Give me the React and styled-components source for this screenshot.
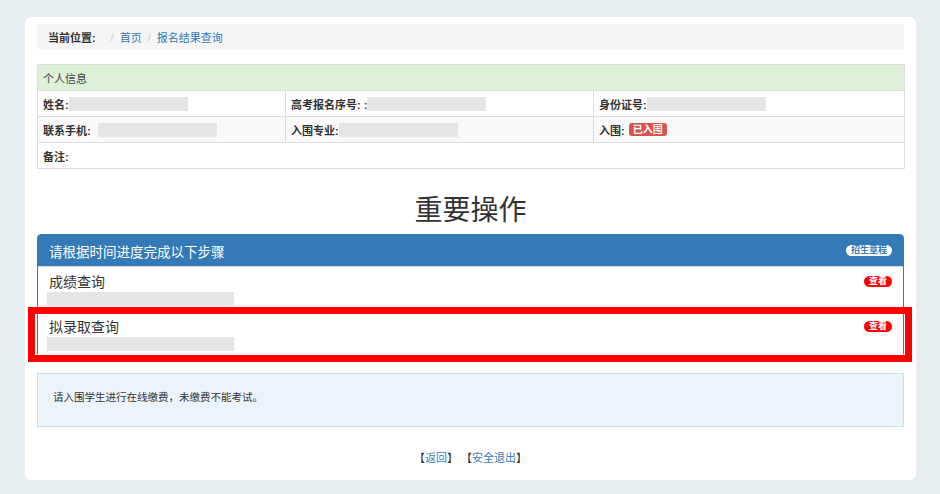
import React from 'react';
import styled, { createGlobalStyle } from 'styled-components';

const GlobalStyle = createGlobalStyle`
body {
  margin: 0;
  background-color: #e7eef1;
  font-family: "Liberation Sans", "Noto Sans CJK SC", sans-serif;
  color: #333;
}
`;

const Card = styled.div`
width: 891px;
margin: 17px 0 14px 25px;
padding: 7px 12px 12px;
box-sizing: border-box;
background-color: #fff;
border-radius: 6px;
`;

const Breadcrumb = styled.div`
display: flex;
align-items: center;
height: 26px;
padding: 0 11px;
background-color: #f5f5f5;
border-radius: 4px;
font-size: 11px;
margin-bottom: 14px;
`;
const CrumbLabel = styled.span`
font-weight: bold;
color: #333;
padding-right: 9px;
`;
const CrumbSep = styled.span`
color: #ccc;
padding: 0 6px;
`;
const Link = styled.a`
color: #337ab7;
text-decoration: none;
cursor: pointer;
`;

const InfoTable = styled.table`
width: 867px;
border-collapse: collapse;
font-size: 11px;
table-layout: fixed;
`;
const HeadCell = styled.td`
height: 25px;
padding: 0 5px;
background-color: #dff0d8;
border: 1px solid #ddd;
color: #444;
`;
const Row = styled.tr`
background-color: ${p => (p.striped ? '#f9f9f9' : '#fff')};
`;
const Cell = styled.td`
height: 25px;
padding: 0 5px;
border: 1px solid #ddd;
font-weight: bold;
white-space: nowrap;
`;
const CellInner = styled.div`
display: flex;
align-items: center;
`;
const Blank = styled.span`
display: inline-block;
width: ${p => p.w || 119}px;
height: 14px;
margin-left: ${p => p.gap || 0}px;
background-color: #e5e5e5;
`;
const DangerLabel = styled.span`
display: inline-block;
margin-left: 4px;
padding: 1px 4px;
font-size: 10px;
line-height: 11px;
font-weight: bold;
color: #fff;
background-color: #d9534f;
border-radius: 3px;
`;

const Title = styled.h2`
margin: 22px 0 3px;
height: 40px;
line-height: 40px;
text-align: center;
font-size: 28px;
font-weight: normal;
color: #333;
`;

const Panel = styled.div`
border: 1px solid #337ab7;
border-radius: 4px;
`;
const PanelHeading = styled.div`
display: flex;
align-items: center;
justify-content: space-between;
height: 31px;
padding: 0 11px;
background-color: #337ab7;
color: #fff;
font-size: 13.5px;
`;
const Pill = styled.span`
display: inline-block;
padding: 0 5px;
font-size: 9px;
line-height: 11px;
font-weight: bold;
border-radius: 10px;
color: ${p => (p.light ? '#337ab7' : '#fff')};
background-color: ${p => (p.light ? '#fff' : '#f00')};
`;
const Item = styled.div`
position: relative;
padding: 5px 11px 5px 9px;
border-top: 1px solid #ddd;
background-color: #fff;
&:first-child {
  border-top: none;
}
`;
const ItemHead = styled.div`
display: flex;
align-items: center;
justify-content: space-between;
height: 18px;
padding-left: 2px;
font-size: 14px;
color: #333;
`;
const ItemBlank = styled.div`
width: 187px;
height: 14px;
margin-top: 2px;
background-color: #e5e5e5;
`;
const Highlight = styled.div`
position: absolute;
top: -5px;
left: -10px;
right: -9px;
bottom: -6px;
border: 7px solid #f00;
pointer-events: none;
`;

const Alert = styled.div`
margin-top: 16px;
padding: 16px 15px 22px;
background-color: #ebf4fb;
border: 1px solid #cbe0ec;
font-size: 10.5px;
line-height: 14px;
color: #333;
`;

const Footer = styled.div`
margin-top: 21px;
height: 20px;
line-height: 20px;
text-align: center;
font-size: 11px;
color: #333;
`;

const steps = [
  { name: '成绩查询' },
  { name: '拟录取查询', marked: true },
];

export default function App() {
  return (
    <>
      <GlobalStyle />
      <Card>
        <Breadcrumb>
          <CrumbLabel>当前位置:</CrumbLabel>
          <CrumbSep>/</CrumbSep>
          <Link>首页</Link>
          <CrumbSep>/</CrumbSep>
          <Link>报名结果查询</Link>
        </Breadcrumb>

        <InfoTable>
          <colgroup>
            <col style={{ width: 248 }} />
            <col style={{ width: 308 }} />
            <col style={{ width: 311 }} />
          </colgroup>
          <tbody>
            <tr>
              <HeadCell colSpan={3}>个人信息</HeadCell>
            </tr>
            <Row>
              <Cell><CellInner>姓名:<Blank /></CellInner></Cell>
              <Cell><CellInner>高考报名序号: :<Blank /></CellInner></Cell>
              <Cell><CellInner>身份证号:<Blank /></CellInner></Cell>
            </Row>
            <Row striped>
              <Cell><CellInner>联系手机:<Blank gap={7} /></CellInner></Cell>
              <Cell><CellInner>入围专业:<Blank /></CellInner></Cell>
              <Cell><CellInner>入围:<DangerLabel>已入围</DangerLabel></CellInner></Cell>
            </Row>
            <Row>
              <Cell colSpan={3}>备注:</Cell>
            </Row>
          </tbody>
        </InfoTable>

        <Title>重要操作</Title>

        <Panel>
          <PanelHeading>
            <span>请根据时间进度完成以下步骤</span>
            <Pill light>招生章程</Pill>
          </PanelHeading>
          {steps.map(s => (
            <Item key={s.name}>
              <ItemHead>
                <span>{s.name}</span>
                <Pill>查看</Pill>
              </ItemHead>
              <ItemBlank />
              {s.marked && <Highlight />}
            </Item>
          ))}
        </Panel>

        <Alert>请入围学生进行在线缴费，未缴费不能考试。</Alert>

        <Footer>
          【<Link>返回</Link>】 【<Link>安全退出</Link>】
        </Footer>
      </Card>
    </>
  );
}
